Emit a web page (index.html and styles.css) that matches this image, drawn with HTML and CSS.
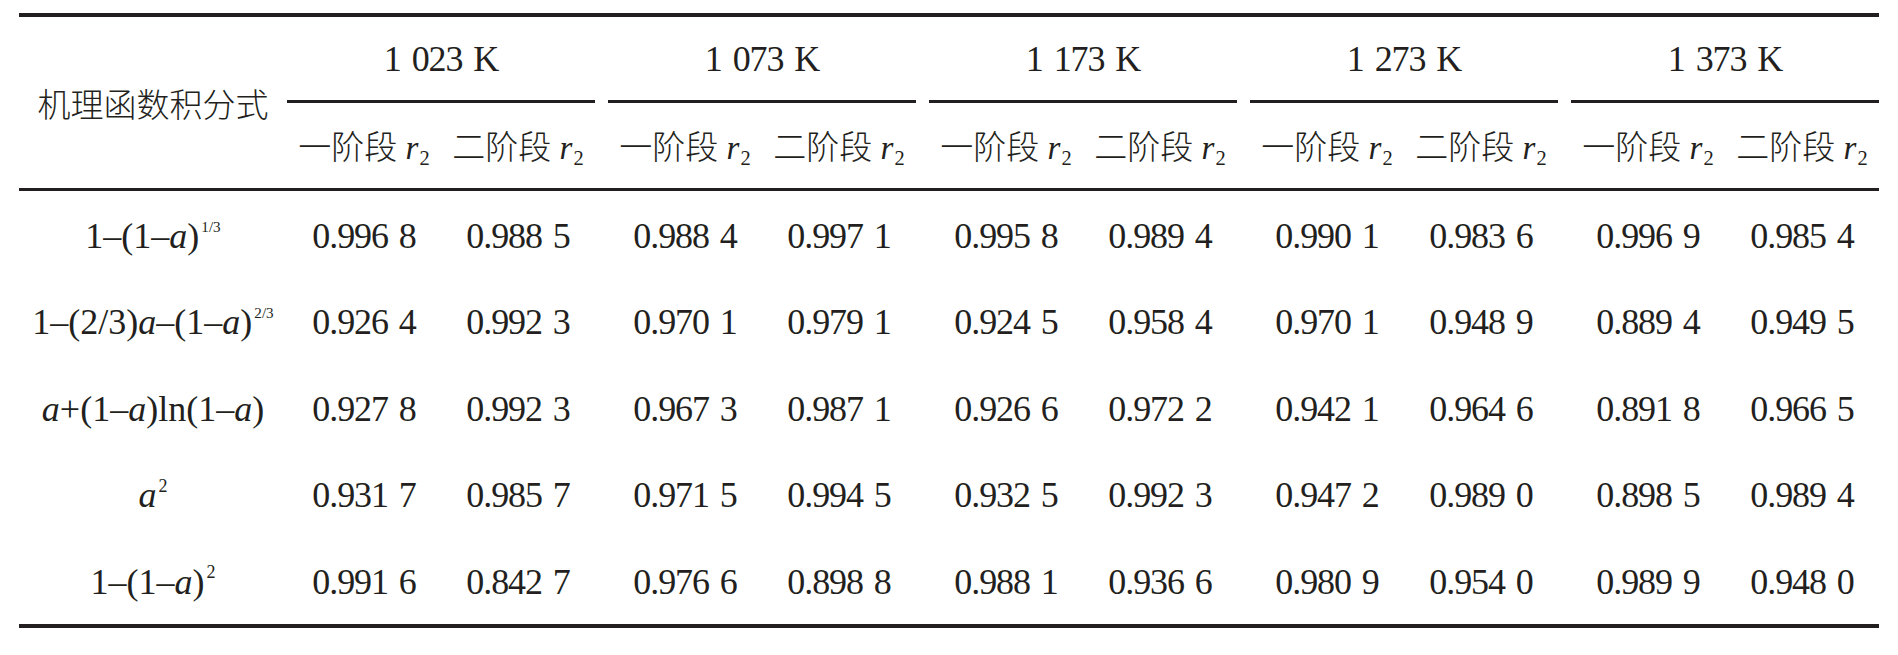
FILE: index.html
```html
<!DOCTYPE html>
<html lang="zh">
<head>
  <meta charset="UTF-8">
  <title>机理函数积分式拟合结果</title>
  <link rel="stylesheet" href="styles.css">
</head>
<body>

<table class="fit">
  <colgroup>
    <col class="c-name">
    <col class="c-a"><col class="c-b">
    <col class="c-a"><col class="c-b">
    <col class="c-a"><col class="c-b">
    <col class="c-a"><col class="c-b">
    <col class="c-a"><col class="c-a">
  </colgroup>
  <thead>
    <tr class="temps">
      <th rowspan="2" class="name">机理函数积分式</th>
      <th colspan="2"><div class="rule">1 023 K</div></th>
      <th colspan="2"><div class="rule">1 073 K</div></th>
      <th colspan="2"><div class="rule">1 173 K</div></th>
      <th colspan="2"><div class="rule">1 273 K</div></th>
      <th colspan="2"><div class="rule last">1 373 K</div></th>
    </tr>
    <tr class="stages">
      <th>一阶段 <i>r</i><sub>2</sub></th><th class="b">二阶段 <i>r</i><sub>2</sub></th>
      <th>一阶段 <i>r</i><sub>2</sub></th><th class="b">二阶段 <i>r</i><sub>2</sub></th>
      <th>一阶段 <i>r</i><sub>2</sub></th><th class="b">二阶段 <i>r</i><sub>2</sub></th>
      <th>一阶段 <i>r</i><sub>2</sub></th><th class="b">二阶段 <i>r</i><sub>2</sub></th>
      <th>一阶段 <i>r</i><sub>2</sub></th><th>二阶段 <i>r</i><sub>2</sub></th>
    </tr>
  </thead>
  <tbody>
    <tr>
      <td class="name">1&ndash;(1&ndash;<i>a</i>)<sup>1/3</sup></td>
      <td>0.996 8</td><td class="b">0.988 5</td>
      <td>0.988 4</td><td class="b">0.997 1</td>
      <td>0.995 8</td><td class="b">0.989 4</td>
      <td>0.990 1</td><td class="b">0.983 6</td>
      <td>0.996 9</td><td>0.985 4</td>
    </tr>
    <tr>
      <td class="name">1&ndash;(2/3)<i>a</i>&ndash;(1&ndash;<i>a</i>)<sup>2/3</sup></td>
      <td>0.926 4</td><td class="b">0.992 3</td>
      <td>0.970 1</td><td class="b">0.979 1</td>
      <td>0.924 5</td><td class="b">0.958 4</td>
      <td>0.970 1</td><td class="b">0.948 9</td>
      <td>0.889 4</td><td>0.949 5</td>
    </tr>
    <tr>
      <td class="name"><i>a</i>+(1&ndash;<i>a</i>)ln(1&ndash;<i>a</i>)</td>
      <td>0.927 8</td><td class="b">0.992 3</td>
      <td>0.967 3</td><td class="b">0.987 1</td>
      <td>0.926 6</td><td class="b">0.972 2</td>
      <td>0.942 1</td><td class="b">0.964 6</td>
      <td>0.891 8</td><td>0.966 5</td>
    </tr>
    <tr>
      <td class="name"><i>a</i><sup class="sq">2</sup></td>
      <td>0.931 7</td><td class="b">0.985 7</td>
      <td>0.971 5</td><td class="b">0.994 5</td>
      <td>0.932 5</td><td class="b">0.992 3</td>
      <td>0.947 2</td><td class="b">0.989 0</td>
      <td>0.898 5</td><td>0.989 4</td>
    </tr>
    <tr>
      <td class="name">1&ndash;(1&ndash;<i>a</i>)<sup class="sq">2</sup></td>
      <td>0.991 6</td><td class="b">0.842 7</td>
      <td>0.976 6</td><td class="b">0.898 8</td>
      <td>0.988 1</td><td class="b">0.936 6</td>
      <td>0.980 9</td><td class="b">0.954 0</td>
      <td>0.989 9</td><td>0.948 0</td>
    </tr>
  </tbody>
</table>

</body>
</html>
```

FILE: styles.css
```css
body {
  margin: 0;
  background: #fff;
  color: #231f20;
  font-family: "Liberation Serif", "Noto Sans CJK SC", serif;
}

.fit {
  width: 1860px;
  margin: 13px 0 0 19px;
  table-layout: fixed;
  border-collapse: separate;
  border-spacing: 0;
  border-top: 4px solid #231f20;
  border-bottom: 4px solid #231f20;
  font-size: 36px;
  line-height: 40px;
  letter-spacing: -1.1px;
  word-spacing: 3px;
}

.c-name { width: 268px; }
.c-a { width: 154px; }
.c-b { width: 167px; }

.fit th,
.fit td {
  box-sizing: border-box;
  padding: 0;
  text-align: center;
  vertical-align: middle;
  white-space: nowrap;
}

.fit th {
  font-weight: 300;
}

.fit .b {
  padding-right: 13px;
}

/* temperature row, each with its own short rule */
.temps .rule {
  padding: 22px 0 21px;
  margin-right: 13px;
  border-bottom: 3px solid #231f20;
}

.temps .rule.last {
  margin-right: 0;
}

.stages th {
  font-size: 33px;
  letter-spacing: 0;
  word-spacing: 0;
  padding-top: 25px;
  padding-bottom: 20px;
  border-bottom: 3px solid #231f20;
}

.fit th.name {
  font-size: 33px;
  letter-spacing: 0;
  border-bottom: 3px solid #231f20;
  padding-top: 6px;
}

.fit td {
  height: 86.5px;
  padding-top: 3px;
}

.fit td.name {
  letter-spacing: 0;
}

i {
  font-style: italic;
}

sub {
  font-size: 0.62em;
  line-height: 0;
  vertical-align: -0.3em;
  margin-left: 1px;
}

sup {
  font-size: 0.42em;
  line-height: 0;
  vertical-align: 1.05em;
  margin-left: 2px;
}

sup.sq {
  font-size: 0.5em;
  vertical-align: 0.85em;
}
```
